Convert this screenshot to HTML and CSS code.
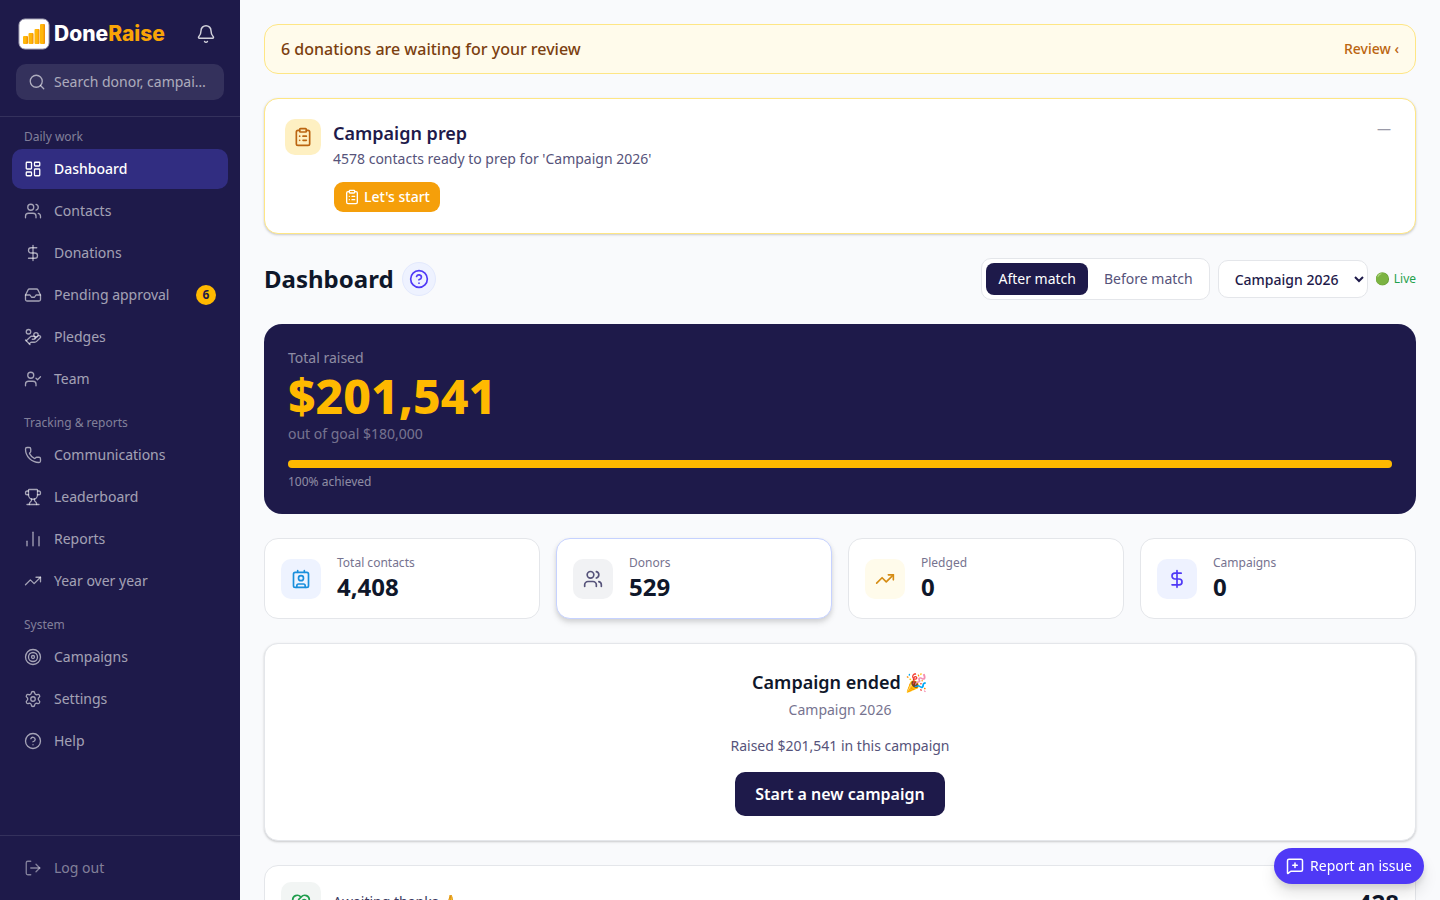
FILE: index.html
```
<!DOCTYPE html>
<html lang="en">
<head>
    <meta charset="UTF-8">
    <meta name="viewport" content="width=device-width, initial-scale=1.0">
    <title>DoneRaise - Dashboard</title>
    <link rel="stylesheet" href="styles.css">
</head>
<body>
    <svg class="sprite" aria-hidden="true">
        <symbol id="bell" viewBox="0 0 24 24"><path d="M10.268 21a2 2 0 0 0 3.464 0"/><path d="M3.262 15.326A1 1 0 0 0 4 17h16a1 1 0 0 0 .74-1.673C19.41 13.956 18 12.499 18 8A6 6 0 0 0 6 8c0 4.499-1.411 5.956-2.738 7.326"/></symbol>
        <symbol id="search" viewBox="0 0 24 24"><circle cx="11" cy="11" r="8"/><path d="m21 21-4.34-4.34"/></symbol>
        <symbol id="dashboard" viewBox="0 0 24 24"><rect width="7" height="9" x="3" y="3" rx="1"/><rect width="7" height="5" x="14" y="3" rx="1"/><rect width="7" height="9" x="14" y="12" rx="1"/><rect width="7" height="5" x="3" y="16" rx="1"/></symbol>
        <symbol id="users" viewBox="0 0 24 24"><path d="M16 21v-2a4 4 0 0 0-4-4H6a4 4 0 0 0-4 4v2"/><path d="M16 3.128a4 4 0 0 1 0 7.744"/><path d="M22 21v-2a4 4 0 0 0-3-3.87"/><circle cx="9" cy="7" r="4"/></symbol>
        <symbol id="dollar" viewBox="0 0 24 24"><path d="M12 2v20"/><path d="M17 5H9.5a3.5 3.5 0 0 0 0 7h5a3.5 3.5 0 0 1 0 7H6"/></symbol>
        <symbol id="inbox" viewBox="0 0 24 24"><path d="M22 12h-6l-2 3h-4l-2-3H2"/><path d="M5.45 5.11 2 12v6a2 2 0 0 0 2 2h16a2 2 0 0 0 2-2v-6l-3.45-6.89A2 2 0 0 0 16.76 4H7.24a2 2 0 0 0-1.79 1.11z"/></symbol>
        <symbol id="hand-coins" viewBox="0 0 24 24"><path d="M11 15h2a2 2 0 1 0 0-4h-3c-.6 0-1.1.2-1.4.6L3 17"/><path d="m7 21 1.6-1.4c.3-.4.8-.6 1.4-.6h4c1.1 0 2.1-.4 2.8-1.2l4.6-4.4a2 2 0 0 0-2.75-2.91l-4.2 3.9"/><path d="m2 16 6 6"/><circle cx="16" cy="9" r="2.9"/><circle cx="6" cy="5" r="3"/></symbol>
        <symbol id="user-check" viewBox="0 0 24 24"><path d="m16 11 2 2 4-4"/><path d="M16 21v-2a4 4 0 0 0-4-4H6a4 4 0 0 0-4 4v2"/><circle cx="9" cy="7" r="4"/></symbol>
        <symbol id="phone" viewBox="0 0 24 24"><path d="M13.832 16.568a1 1 0 0 0 1.213-.303l.355-.465A2 2 0 0 1 17 15h3a2 2 0 0 1 2 2v3a2 2 0 0 1-2 2A18 18 0 0 1 2 4a2 2 0 0 1 2-2h3a2 2 0 0 1 2 2v3a2 2 0 0 1-.8 1.6l-.468.351a1 1 0 0 0-.292 1.233 14 14 0 0 0 6.392 6.384"/></symbol>
        <symbol id="trophy" viewBox="0 0 24 24"><path d="M10 14.66v1.626a2 2 0 0 1-.976 1.696A5 5 0 0 0 7 21.978"/><path d="M14 14.66v1.626a2 2 0 0 0 .976 1.696A5 5 0 0 1 17 21.978"/><path d="M18 9h1.5a2.5 2.5 0 0 0 0-5H18"/><path d="M4 22h16"/><path d="M6 9a6 6 0 0 0 12 0V3a1 1 0 0 0-1-1H7a1 1 0 0 0-1 1z"/><path d="M6 9H4.5a2.5 2.5 0 0 1 0-5H6"/></symbol>
        <symbol id="bars" viewBox="0 0 24 24"><path d="M4 21v-6"/><path d="M12 21V3"/><path d="M20 21V9"/></symbol>
        <symbol id="trending" viewBox="0 0 24 24"><path d="M16 7h6v6"/><path d="m22 7-8.5 8.5-5-5L2 17"/></symbol>
        <symbol id="target" viewBox="0 0 24 24"><circle cx="12" cy="12" r="10"/><circle cx="12" cy="12" r="6"/><circle cx="12" cy="12" r="2"/></symbol>
        <symbol id="settings" viewBox="0 0 24 24"><path d="M9.671 4.136a2.34 2.34 0 0 1 4.659 0 2.34 2.34 0 0 0 3.319 1.915 2.34 2.34 0 0 1 2.33 4.033 2.34 2.34 0 0 0 0 3.831 2.34 2.34 0 0 1-2.33 4.033 2.34 2.34 0 0 0-3.319 1.915 2.34 2.34 0 0 1-4.659 0 2.34 2.34 0 0 0-3.32-1.915 2.34 2.34 0 0 1-2.33-4.033 2.34 2.34 0 0 0 0-3.831A2.34 2.34 0 0 1 6.35 6.051a2.34 2.34 0 0 0 3.319-1.915"/><circle cx="12" cy="12" r="3"/></symbol>
        <symbol id="help" viewBox="0 0 24 24"><circle cx="12" cy="12" r="10"/><path d="M9.09 9a3 3 0 0 1 5.83 1c0 2-3 3-3 3"/><path d="M12 17h.01"/></symbol>
        <symbol id="logout" viewBox="0 0 24 24"><path d="m16 17 5-5-5-5"/><path d="M21 12H9"/><path d="M9 21H5a2 2 0 0 1-2-2V5a2 2 0 0 1 2-2h4"/></symbol>
        <symbol id="clipboard" viewBox="0 0 24 24"><rect width="8" height="4" x="8" y="2" rx="1"/><path d="M16 4h2a2 2 0 0 1 2 2v14a2 2 0 0 1-2 2H6a2 2 0 0 1-2-2V6a2 2 0 0 1 2-2h2"/><path d="M12 11h4"/><path d="M12 16h4"/><path d="M8 11h.01"/><path d="M8 16h.01"/></symbol>
        <symbol id="contact" viewBox="0 0 24 24"><path d="M16 2v2"/><path d="M7 22v-2a2 2 0 0 1 2-2h6a2 2 0 0 1 2 2v2"/><path d="M8 2v2"/><circle cx="12" cy="11" r="3"/><rect x="3" y="4" width="18" height="18" rx="2"/></symbol>
        <symbol id="thanks" viewBox="0 0 24 24"><path d="M19.414 14.414C21 12.828 22 11.5 22 9.5a5.5 5.5 0 0 0-9.591-3.676.6.6 0 0 1-.818.001A5.5 5.5 0 0 0 2 9.5c0 2.3 1.5 4 3 5.5l5.535 5.362a2 2 0 0 0 2.879.052 2.12 2.12 0 0 0-.004-3 2.124 2.124 0 1 0 3-3 2.124 2.124 0 0 0 3.004 0 2 2 0 0 0 0-2.828l-1.881-1.882a2.41 2.41 0 0 0-3.409 0l-1.71 1.71a2 2 0 0 1-2.828 0 2 2 0 0 1 0-2.828l2.823-2.762"/></symbol>
        <symbol id="message-plus" viewBox="0 0 24 24"><path d="M22 17a2 2 0 0 1-2 2H6.828a2 2 0 0 0-1.414.586l-2.202 2.202A.71.71 0 0 1 2 21.286V5a2 2 0 0 1 2-2h16a2 2 0 0 1 2 2z"/><path d="M12 8v6"/><path d="M9 11h6"/></symbol>
    </svg>

    <div class="layout">
        <aside class="sidebar">
            <div class="sidebar-header">
                <div class="brand-row">
                    <a class="brand" href="#">
                        <svg class="brand-mark" viewBox="0 0 32 32" aria-hidden="true">
                            <defs>
                                <linearGradient id="bar-fill" x1="0" x2="1" y1="0" y2="0">
                                    <stop offset="0.55" stop-color="#ffb70a"/>
                                    <stop offset="1" stop-color="#f08a06"/>
                                </linearGradient>
                            </defs>
                            <rect x="1" y="1" width="30" height="30" rx="6" fill="#fff" stroke="#a5a3b7"/>
                            <g fill="url(#bar-fill)">
                                <rect x="5" y="18" width="5" height="8" rx="1"/>
                                <rect x="10.5" y="15" width="5" height="11" rx="1"/>
                                <rect x="16.5" y="11" width="5" height="15" rx="1"/>
                                <rect x="22" y="6" width="5" height="20" rx="1"/>
                            </g>
                        </svg>
                        <span class="brand-name">Done<span class="brand-accent">Raise</span></span>
                    </a>
                    <button class="bell" type="button" aria-label="Notifications"><svg class="icon icon-20"><use href="#bell"/></svg></button>
                </div>
                <label class="search">
                    <svg class="icon icon-18"><use href="#search"/></svg>
                    <input type="text" placeholder="Search donor, campaign, contact" aria-label="Search">
                </label>
            </div>

            <nav class="nav">
                <div class="nav-title">Daily work</div>
                <a class="nav-item active" href="#"><svg class="icon icon-18"><use href="#dashboard"/></svg>Dashboard</a>
                <a class="nav-item" href="#"><svg class="icon icon-18"><use href="#users"/></svg>Contacts</a>
                <a class="nav-item" href="#"><svg class="icon icon-18"><use href="#dollar"/></svg>Donations</a>
                <a class="nav-item" href="#"><svg class="icon icon-18"><use href="#inbox"/></svg>Pending approval<span class="badge">6</span></a>
                <a class="nav-item" href="#"><svg class="icon icon-18"><use href="#hand-coins"/></svg>Pledges</a>
                <a class="nav-item" href="#"><svg class="icon icon-18"><use href="#user-check"/></svg>Team</a>
                <div class="nav-title">Tracking &amp; reports</div>
                <a class="nav-item" href="#"><svg class="icon icon-18"><use href="#phone"/></svg>Communications</a>
                <a class="nav-item" href="#"><svg class="icon icon-18"><use href="#trophy"/></svg>Leaderboard</a>
                <a class="nav-item" href="#"><svg class="icon icon-18"><use href="#bars"/></svg>Reports</a>
                <a class="nav-item" href="#"><svg class="icon icon-18"><use href="#trending"/></svg>Year over year</a>
                <div class="nav-title">System</div>
                <a class="nav-item" href="#"><svg class="icon icon-18"><use href="#target"/></svg>Campaigns</a>
                <a class="nav-item" href="#"><svg class="icon icon-18"><use href="#settings"/></svg>Settings</a>
                <a class="nav-item" href="#"><svg class="icon icon-18"><use href="#help"/></svg>Help</a>
            </nav>

            <div class="sidebar-footer">
                <button class="nav-item logout" type="button"><svg class="icon icon-18"><use href="#logout"/></svg>Log out</button>
            </div>
        </aside>

        <main class="main">
            <div class="alert">
                <span>6 donations are waiting for your review</span>
                <a class="alert-link" href="#">Review ‹</a>
            </div>

            <section class="card prep">
                <div class="tile tile-prep"><svg class="icon icon-20"><use href="#clipboard"/></svg></div>
                <div class="prep-body">
                    <h2>Campaign prep</h2>
                    <p>4578 contacts ready to prep for 'Campaign 2026'</p>
                    <button class="btn-start" type="button"><svg class="icon icon-16"><use href="#clipboard"/></svg>Let's start</button>
                </div>
                <button class="minimize" type="button" aria-label="Minimize">—</button>
            </section>

            <div class="page-header">
                <div class="page-title">
                    <h1>Dashboard</h1>
                    <button class="help-btn" type="button" aria-label="Help"><svg class="icon icon-20"><use href="#help"/></svg></button>
                </div>
                <div class="controls">
                    <div class="toggle">
                        <button class="selected" type="button">After match</button>
                        <button type="button">Before match</button>
                    </div>
                    <select class="campaign-select" aria-label="Campaign">
                        <option>Campaign 2026</option>
                    </select>
                    <span class="live">🟢 Live</span>
                </div>
            </div>

            <section class="hero">
                <div class="hero-label">Total raised</div>
                <div class="hero-amount">$201,541</div>
                <div class="hero-goal">out of goal $180,000</div>
                <div class="progress"><div class="progress-fill" style="width: 100%"></div></div>
                <div class="hero-percent">100% achieved</div>
            </section>

            <section class="stats">
                <a class="stat" href="#">
                    <div class="tile tile-blue"><svg class="icon icon-20"><use href="#contact"/></svg></div>
                    <div><div class="stat-label">Total contacts</div><div class="stat-value">4,408</div></div>
                </a>
                <a class="stat stat-active" href="#">
                    <div class="tile tile-gray"><svg class="icon icon-20"><use href="#users"/></svg></div>
                    <div><div class="stat-label">Donors</div><div class="stat-value">529</div></div>
                </a>
                <a class="stat" href="#">
                    <div class="tile tile-amber"><svg class="icon icon-20"><use href="#trending"/></svg></div>
                    <div><div class="stat-label">Pledged</div><div class="stat-value">0</div></div>
                </a>
                <a class="stat" href="#">
                    <div class="tile tile-indigo"><svg class="icon icon-20"><use href="#dollar"/></svg></div>
                    <div><div class="stat-label">Campaigns</div><div class="stat-value">0</div></div>
                </a>
            </section>

            <section class="card ended">
                <h2>Campaign ended 🎉</h2>
                <p class="ended-name">Campaign 2026</p>
                <p class="ended-total">Raised $201,541 in this campaign</p>
                <button class="btn-new" type="button">Start a new campaign</button>
            </section>

            <a class="thanks" href="#">
                <div class="tile tile-green"><svg class="icon icon-20"><use href="#thanks"/></svg></div>
                <span class="thanks-text">Awaiting thanks 🙏</span>
                <span class="stat-value">428</span>
            </a>
        </main>
    </div>

    <button class="report" type="button"><svg class="icon icon-18"><use href="#message-plus"/></svg>Report an issue</button>
</body>
</html>
```
FILE: styles.css
```
* {
    margin: 0;
    padding: 0;
    box-sizing: border-box;
}

body {
    background: #f9fafc;
    color: #0f172a;
    font-family: "Noto Sans", "Noto Color Emoji", sans-serif;
    font-size: 14px;
    line-height: 20px;
}

a {
    color: inherit;
    text-decoration: none;
}

button,
input,
select {
    font: inherit;
    color: inherit;
    border: none;
    background: none;
}

button {
    cursor: pointer;
}

.sprite {
    display: none;
}

.icon {
    flex-shrink: 0;
    fill: none;
    stroke: currentColor;
    stroke-width: 2;
    stroke-linecap: round;
    stroke-linejoin: round;
}

.icon-16 {
    width: 16px;
    height: 16px;
}

.icon-18 {
    width: 18px;
    height: 18px;
}

.icon-20 {
    width: 20px;
    height: 20px;
}

.layout {
    display: flex;
    align-items: flex-start;
}

/* Sidebar */
.sidebar {
    position: sticky;
    top: 0;
    display: flex;
    flex-direction: column;
    flex-shrink: 0;
    width: 240px;
    height: 100vh;
    background: #1e1a4a;
    color: rgba(255, 255, 255, 0.6);
}

.sidebar .icon {
    stroke-width: 1.75;
}

.sidebar-header {
    padding: 16px;
    border-bottom: 1px solid rgba(255, 255, 255, 0.1);
}

.brand-row {
    display: flex;
    align-items: center;
    justify-content: space-between;
    height: 36px;
    margin-bottom: 12px;
}

.brand {
    display: flex;
    align-items: center;
    gap: 4px;
    padding-left: 2px;
}

.brand-mark {
    width: 32px;
    height: 32px;
}

.brand-name {
    color: #fff;
    font-family: Inter, sans-serif;
    font-size: 21px;
    font-weight: 800;
    line-height: 32px;
}

.brand-accent {
    color: #f9a406;
}

.bell {
    display: flex;
    padding: 8px;
    color: rgba(255, 255, 255, 0.8);
}

.search {
    display: flex;
    align-items: center;
    gap: 8px;
    height: 36px;
    padding: 0 12px;
    border-radius: 10px;
    background: rgba(255, 255, 255, 0.1);
}

.search input {
    flex: 1;
    min-width: 0;
    outline: none;
    text-overflow: ellipsis;
}

.search input::placeholder {
    color: rgba(255, 255, 255, 0.6);
}

.nav {
    display: flex;
    flex: 1;
    flex-direction: column;
    gap: 2px;
    padding: 12px;
    overflow: hidden;
}

.nav-title {
    padding: 0 12px 2px;
    color: rgba(255, 255, 255, 0.45);
    font-size: 12px;
    line-height: 16px;
}

.nav-item + .nav-title {
    margin-top: 14px;
}

.nav-item {
    display: flex;
    align-items: center;
    flex-shrink: 0;
    gap: 12px;
    height: 40px;
    padding: 0 12px;
    border-radius: 10px;
}

.nav-item.active {
    background: #312d81;
    color: #fff;
    font-weight: 500;
}

.badge {
    width: 20px;
    margin-left: auto;
    border-radius: 50%;
    background: #ffb900;
    color: #1e1a4a;
    font-size: 12px;
    font-weight: 700;
    text-align: center;
}

.sidebar-footer {
    padding: 12px;
    border-top: 1px solid rgba(255, 255, 255, 0.1);
}

.logout {
    width: 100%;
    color: rgba(255, 255, 255, 0.45);
}

/* Content */
.main {
    display: flex;
    flex: 1;
    flex-direction: column;
    gap: 24px;
    min-width: 0;
    padding: 24px;
}

.card {
    border: 1px solid #e4e6ea;
    border-radius: 14px;
    background: #fff;
    box-shadow: 0 1px 3px rgba(0, 0, 0, 0.1), 0 1px 2px rgba(0, 0, 0, 0.1);
}

.alert {
    display: flex;
    align-items: center;
    justify-content: space-between;
    padding: 12px 16px;
    border: 1px solid #fee685;
    border-radius: 14px;
    background: #fffbeb;
    color: #7b3f10;
    font-size: 16px;
    font-weight: 500;
    line-height: 24px;
}

.alert-link {
    color: #bb6510;
    font-size: 14px;
}

.tile {
    display: flex;
    align-items: center;
    justify-content: center;
    flex-shrink: 0;
    width: 40px;
    height: 40px;
    border-radius: 10px;
}

.prep {
    display: flex;
    align-items: flex-start;
    gap: 12px;
    padding: 20px;
    border-color: #fee685;
}

.tile-prep {
    width: 36px;
    height: 36px;
    background: #fef0c2;
    color: #bb6510;
}

.prep-body {
    flex: 1;
}

h2 {
    font-size: 18px;
    font-weight: 600;
    line-height: 28px;
}

.prep h2 {
    color: #1e1a4a;
}

.prep p {
    margin: 2px 0 12px;
    color: #56537a;
}

.btn-start {
    display: flex;
    align-items: center;
    gap: 4px;
    height: 32px;
    padding: 0 10px;
    border: 1px solid transparent;
    border-radius: 10px;
    background: #f59f0a;
    background-clip: padding-box;
    color: #fff;
    font-weight: 500;
}

.minimize {
    padding: 0 4px;
    color: #9a9aa8;
}

.page-header,
.page-title,
.controls {
    display: flex;
    align-items: center;
    gap: 8px;
}

.page-header {
    justify-content: space-between;
}

h1 {
    font-size: 24px;
    font-weight: 700;
    line-height: 32px;
}

.help-btn {
    display: flex;
    padding: 6px;
    border: 1px solid #e3e9fd;
    border-radius: 50%;
    background: #eef2ff;
    color: #4f39f6;
}

.toggle {
    display: flex;
    gap: 4px;
    padding: 4px;
    border: 1px solid #e4e6ea;
    border-radius: 10px;
    background: #fff;
}

.toggle button {
    height: 32px;
    padding: 0 12px;
    border-radius: 8px;
    color: #56537a;
}

.toggle .selected {
    background: #1e1a4a;
    color: #fff;
}

.campaign-select {
    height: 38px;
    padding: 0 12px;
    border: 1px solid #e4e6ea;
    border-radius: 10px;
    background: #fff;
    color: #1e1a4a;
    font-weight: 500;
}

.live {
    color: #1fa14c;
    font-size: 12px;
}

.hero {
    padding: 24px;
    border-radius: 18px;
    background: #1e1a4a;
    color: rgba(255, 255, 255, 0.5);
}

.hero-amount {
    margin: 4px 0;
    color: #ffb900;
    font-size: 48px;
    font-weight: 800;
    line-height: 48px;
}

.hero-goal {
    color: rgba(255, 255, 255, 0.4);
}

.progress {
    height: 8px;
    margin: 16px 0 6px;
    border-radius: 4px;
    background: rgba(255, 255, 255, 0.1);
}

.progress-fill {
    height: 100%;
    border-radius: 4px;
    background: #ffb900;
}

.hero-percent {
    font-size: 12px;
    line-height: 16px;
}

.stats {
    display: grid;
    grid-template-columns: repeat(4, 1fr);
    gap: 16px;
}

.stat {
    display: flex;
    align-items: center;
    gap: 16px;
    padding: 16px;
    border: 1px solid #e4e6ea;
    border-radius: 14px;
    background: #fff;
}

.stat-active {
    border-color: #c6d2ff;
    box-shadow: 0 4px 6px rgba(0, 0, 0, 0.1), 0 2px 4px rgba(0, 0, 0, 0.08);
}

.stat-label {
    color: #76738f;
    font-size: 12px;
    line-height: 16px;
}

.stat-value {
    font-size: 24px;
    font-weight: 700;
    line-height: 31px;
}

.tile-blue {
    background: #eef3ff;
    color: #1a8fdc;
}

.tile-gray {
    background: #f1f2f4;
    color: #56537a;
}

.tile-amber {
    background: #fffbeb;
    color: #d58c14;
}

.tile-indigo {
    background: #eef2ff;
    color: #4f39f6;
}

.tile-green {
    background: #f2f5f4;
    color: #1f9d4c;
}

.ended {
    display: flex;
    flex-direction: column;
    align-items: center;
    padding: 24px;
}

.ended-name {
    margin: 4px 0 16px;
    color: #76738f;
}

.ended-total {
    color: #56537a;
}

.btn-new {
    height: 44px;
    margin-top: 16px;
    padding: 0 20px;
    border-radius: 10px;
    background: #1e1a4a;
    color: #fff;
    font-size: 16px;
    font-weight: 600;
}

.thanks {
    display: flex;
    align-items: center;
    gap: 12px;
    padding: 16px;
    border: 1px solid #e4e6ea;
    border-radius: 14px;
    background: #fff;
}

.thanks-text {
    flex: 1;
    color: #3b3860;
}

.report {
    position: fixed;
    right: 16px;
    bottom: 16px;
    display: flex;
    align-items: center;
    gap: 6px;
    height: 36px;
    padding: 0 12px;
    border-radius: 18px;
    background: #4f39f6;
    box-shadow: 0 10px 15px rgba(0, 0, 0, 0.1), 0 4px 6px rgba(0, 0, 0, 0.1);
    color: #fff;
}
```
